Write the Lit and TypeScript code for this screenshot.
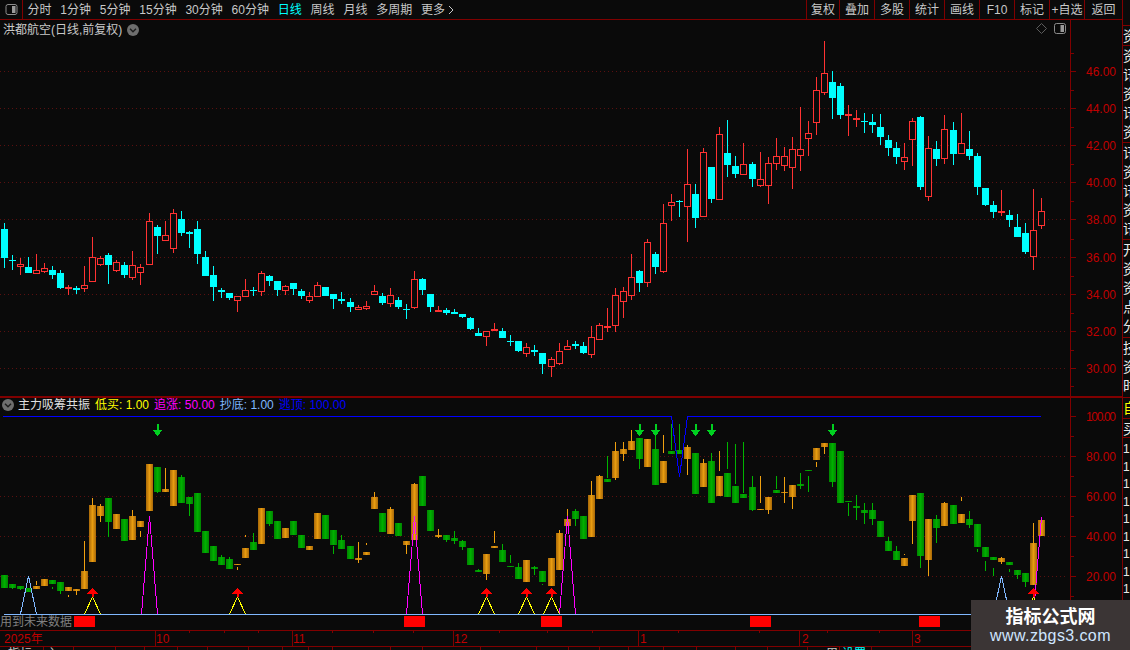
import { LitElement, html, css, svg } from "lit";
import { customElement } from "lit/decorators.js";

// [high, bodyTop, bodyBottom, low, rising]  all in page pixels
const PRICE: number[][] = [
	[223,229,258,268,0],[255,260,261,270,0],[258,264,267,275,1],[257,267,273,273,0],[254,270,274,274,1],
	[263,268,272,273,1],[266,270,275,279,0],[270,273,288,289,0],[285,287,289,295,1],[286,288,290,294,0],
	[266,285,289,292,1],[237,257,282,282,1],[256,258,265,266,1],[253,255,265,284,0],[260,262,271,272,1],
	[262,265,275,278,0],[251,265,278,280,1],[264,267,273,285,1],[213,221,265,265,1],[225,227,236,254,0],
	[221,235,241,241,1],[209,213,249,253,1],[211,219,233,236,0],[231,232,234,248,0],[221,229,254,264,0],
	[251,257,276,276,0],[266,275,287,301,0],[288,290,292,298,0],[293,293,298,300,0],[296,296,301,312,1],
	[279,290,297,297,1],[287,290,291,296,0],[271,273,292,296,1],[275,276,281,286,0],[281,281,290,296,0],
	[285,286,291,295,1],[283,283,289,295,0],[289,291,296,299,0],[292,296,301,303,1],[282,285,297,297,1],
	[287,287,296,296,0],[294,294,299,309,0],[292,299,301,304,0],[298,302,307,312,0],[305,307,310,310,1],
	[301,306,309,310,1],[285,291,295,295,1],[293,296,303,305,0],[288,295,304,307,1],[297,300,307,309,0],
	[304,309,310,319,0],[271,279,308,309,1],[278,279,290,295,0],[294,294,307,312,0],[306,310,312,312,1],
	[308,310,313,315,0],[309,312,314,314,0],[314,314,317,318,0],[317,318,329,330,0],[328,333,336,336,0],
	[331,331,337,346,1],[323,329,330,330,1],[328,331,338,338,0],[335,341,342,346,0],[341,341,351,352,0],
	[343,347,354,357,1],[345,350,352,356,0],[353,353,364,374,0],[357,359,367,377,1],[343,351,364,365,1],
	[340,346,350,350,1],[341,344,346,349,0],[342,346,353,354,0],[326,337,355,358,1],[323,325,340,340,1],
	[308,326,328,332,1],[288,295,326,332,1],[287,291,302,318,1],[254,277,296,300,1],[270,271,283,292,0],
	[239,242,283,287,1],[252,254,267,274,0],[204,223,272,273,1],[194,202,206,221,1],[200,201,202,217,0],
	[149,184,207,242,1],[184,194,218,228,0],[148,152,217,217,1],[167,167,199,203,0],[127,134,200,200,1],
	[120,153,165,177,0],[156,166,174,178,0],[143,164,175,175,1],[162,164,179,187,0],[152,179,186,187,1],
	[157,163,186,204,1],[138,156,164,170,1],[147,156,166,171,1],[137,149,168,189,1],[107,149,156,171,1],
	[121,133,139,156,1],[77,90,123,135,1],[41,73,93,95,1],[71,82,98,119,0],[83,86,115,119,0],
	[105,114,116,136,1],[110,118,120,127,1],[113,121,122,133,0],[114,122,125,133,0],[114,127,137,145,0],
	[135,140,148,156,0],[142,148,157,164,0],[143,157,162,170,1],[118,121,140,166,1],[116,117,187,190,0],
	[136,148,197,201,1],[141,149,159,166,0],[115,129,159,164,1],[122,130,154,165,0],[113,143,154,154,1],
	[131,149,156,160,0],[153,156,187,195,0],[188,188,205,206,0],[201,205,212,218,0],[190,211,213,216,1],
	[210,215,220,227,0],[214,227,237,237,0],[223,233,252,254,0],[189,230,257,270,1],[198,211,226,229,1],
];

// [bodyTop, bodyBottom, wickTop, wickBottom, orange]  wick may float off the body
const FLOW: number[][] = [
	[575,588,0,0,0],[584,588,588,589,0],[586,589,589,590,0],[588,592,0,0,0],[586,589,581,585,1],
	[579,586,0,0,1],[580,584,587,589,0],[582,591,591,594,0],[587,591,595,597,1],[589,591,591,595,1],
	[571,589,541,571,1],[505,562,498,505,1],[506,516,504,522,1],[498,522,522,537,0],[514,529,0,0,1],
	[519,541,0,0,0],[516,540,510,516,1],[521,527,531,537,1],[464,511,0,0,1],[467,492,492,493,0],
	[489,492,468,489,1],[470,506,0,0,1],[477,503,475,477,0],[497,504,504,516,0],[493,532,0,0,0],
	[531,553,0,0,0],[546,561,0,0,0],[557,565,555,557,0],[559,569,557,559,0],[564,565,567,570,1],
	[548,558,535,537,1],[542,550,533,542,0],[508,544,0,0,1],[511,524,524,526,0],[521,539,0,0,0],
	[528,538,0,0,1],[521,535,0,0,0],[535,548,0,0,0],[546,550,0,0,1],[513,539,0,0,1],
	[515,539,0,0,0],[530,545,546,554,0],[540,549,535,540,0],[546,559,0,0,0],[558,560,542,563,1],
	[552,555,543,545,1],[497,509,492,497,1],[513,532,0,0,0],[509,534,507,509,1],[523,536,0,0,0],
	[541,545,545,554,1],[484,540,483,484,1],[476,506,0,0,0],[510,531,0,0,0],[535,537,529,538,1],
	[535,540,540,542,0],[538,541,531,544,0],[541,547,540,550,0],[548,565,0,0,0],[570,572,569,570,0],
	[554,574,574,580,1],[546,548,531,543,1],[550,562,544,550,0],[566,567,555,563,0],[567,579,563,567,0],
	[560,582,0,0,1],[567,569,566,575,0],[571,582,584,585,0],[558,586,0,0,1],[533,570,530,533,1],
	[519,526,509,519,1],[511,519,509,526,0],[516,539,0,0,0],[495,537,481,495,1],[476,499,475,476,1],
	[479,482,456,478,0],[451,478,442,480,1],[449,454,442,461,1],[441,450,430,441,1],[438,459,459,469,0],
	[439,467,0,0,1],[449,485,436,449,0],[461,483,435,453,1],[451,454,424,450,0],[450,454,424,450,0],
	[447,459,445,475,1],[453,494,0,0,0],[463,487,459,463,1],[461,503,453,461,0],[476,496,451,471,1],
	[473,497,442,469,0],[486,503,444,484,0],[494,498,442,493,0],[487,510,476,511,0],[509,510,476,503,1],
	[497,510,510,514,1],[490,493,476,489,0],[492,493,477,503,1],[485,497,497,509,1],[484,486,473,489,0],
	[470,471,476,492,0],[448,460,462,467,1],[443,447,447,454,1],[443,482,482,487,0],[451,503,0,0,0],
	[501,502,503,516,0],[506,508,495,520,0],[510,513,503,524,0],[510,519,503,525,0],[521,537,0,0,0],
	[541,551,537,541,0],[551,560,546,551,0],[558,566,554,555,1],[495,521,521,544,1],[493,556,556,568,0],
	[519,560,560,576,1],[519,528,515,543,0],[503,526,502,503,1],[505,524,0,0,0],[514,523,497,501,1],
	[519,525,511,528,0],[524,547,549,552,0],[547,557,561,571,0],[557,560,568,576,0],[558,562,557,564,1],
	[562,565,569,572,0],[570,575,575,579,0],[573,582,582,587,0],[543,585,523,543,1],[520,536,0,0,1],
];

const PRICE_LABELS: [string, number][] = [["46.00",71.5],["44.00",108.5],["42.00",145.5],["40.00",182.5],["38.00",219.5],["36.00",257],["34.00",294],["32.00",331],["30.00",368]];
const FLOW_LABELS: [string, number][] = [["100.00",416.5],["80.00",456.5],["60.00",496.5],["40.00",536.5],["20.00",576.5]];
const MONTHS: [string, number][] = [["2025年",4],["10",156],["11",293],["12",454],["1",640],["2",802],["3",914]];
const MONTH_LINES = [155,292,453,638,799,912];
const AXIS_TICKS = [189,224,258,332,373,413,499,547,592,678,759,827,879];
const TAB_LINES = [43,73,115,144,177,207,248,282,308,332,390,422,480,536,568,599,628,663,696,735,767,807,839,871];
const RED_BLOCKS = [74,404,541,750,919];
const YELLOW_TRI = [11,29,60,65,68,128];
const DOWN_ARROWS = [19,79,81,86,88,103];

const cx = (i: number) => Math.floor(4.3 + 8.04 * i);

@customElement("chart-canvas")
class ChartCanvas extends LitElement {
	static styles = css`
		:host { display: block; width: 1122px; height: 630px; }
		svg { display: block; shape-rendering: crispEdges; }
		.rise { stroke: #ff3232; fill: #0a0a0a; }
		.rise-w { fill: #ff3232; }
		.fall { fill: #00ffff; }
		.grid { stroke: #5a1010; stroke-dasharray: 1 3; }
		.axis { stroke: #800000; }
		.orange-w { fill: #f0a010; }
		.green-w { fill: #00b400; }
		.lbl { font: 12px "Liberation Sans", sans-serif; fill: #c00000; }
		.mon { font: 12px "Liberation Sans", "Noto Sans CJK SC", sans-serif; fill: #c00000; }
		.tab { font: 12px "Noto Sans CJK SC", sans-serif; fill: #c8c8c8; }
		.tab-on { fill: #00ffff; }
		.spike-m { fill: none; stroke: #ff00ff; }
		.spike-b { fill: none; stroke: #80b8ff; }
		.spike-y { fill: none; stroke: #ffff00; }
		.blue { fill: none; stroke: #0000ff; }
		.base { stroke: #80b8ff; }
		.up { fill: #ff0000; }
		.dn { fill: #00d020; }
		.block { fill: #ff0000; }
	`;

	candle(c: number[], i: number) {
		const x = cx(i);
		const [hi, top, bot, lo, up] = c;
		if (up) {
			return svg`<rect class="rise-w" x=${x} y=${hi} width="1" height=${lo - hi}></rect>
				<rect class="rise" x=${x - 3 + 0.5} y=${top + 0.5} width="6" height=${Math.max(bot - top - 1, 1)}></rect>`;
		}
		return svg`<rect class="fall" x=${x} y=${hi} width="1" height=${lo - hi}></rect>
			<rect class="fall" x=${x - 3} y=${top} width="7" height=${Math.max(bot - top, 1)}></rect>`;
	}

	flowBar(c: number[], i: number) {
		const x = cx(i);
		const [top, bot, wt, wb, orange] = c;
		return svg`${wt ? svg`<rect class=${orange ? "orange-w" : "green-w"} x=${x} y=${wt} width="1" height=${wb - wt}></rect>` : ""}
			<rect fill=${orange ? "url(#bar-o)" : "url(#bar-g)"} x=${x - 3} y=${top} width="7" height=${Math.max(bot - top, 1)}></rect>`;
	}

	spike(i: number, apex: number, cls: string) {
		const x = cx(i) + 0.5;
		return svg`<polyline class=${cls} points="${x - 8},614 ${x},${apex} ${x + 8},614"></polyline>`;
	}

	render() {
		return html`<svg width="1122" height="630" viewBox="0 20 1122 630">
			<defs>
				<linearGradient id="bar-o">
					<stop offset="0" stop-color="#a86808"></stop>
					<stop offset="0.5" stop-color="#e89c10"></stop>
					<stop offset="1" stop-color="#a86808"></stop>
				</linearGradient>
				<linearGradient id="bar-g">
					<stop offset="0" stop-color="#008400"></stop>
					<stop offset="0.5" stop-color="#00b000"></stop>
					<stop offset="1" stop-color="#008400"></stop>
				</linearGradient>
			</defs>

			${PRICE_LABELS.map(([t, y]) => svg`
				<line class="grid" x1="0" x2="1068" y1=${y} y2=${y}></line>
				<line class="axis" x1="1071" x2="1076" y1=${y} y2=${y}></line>
				<line class="axis" x1="1071" x2="1074" y1=${y - 18} y2=${y - 18}></line>
				<text class="lbl" x="1086" y=${y + 4.5} textLength="30">${t}</text>`)}
			<line class="axis" x1="1071" x2="1074" y1="386" y2="386"></line>
			${FLOW_LABELS.map(([t, y]) => svg`
				${y > 420 ? svg`<line class="grid" x1="0" x2="1068" y1=${y} y2=${y}></line>` : ""}
				<line class="axis" x1="1071" x2="1076" y1=${y} y2=${y}></line>
				<line class="axis" x1="1071" x2="1074" y1=${y + 20} y2=${y + 20}></line>
				<text class="lbl" x="1086" y=${y + 4.5} textLength="30">${t}</text>`)}

			<line class="axis" x1="1070.5" x2="1070.5" y1="20" y2="630"></line>
			<rect x="0" y="396" width="1122" height="2" fill="#800000"></rect>

			${PRICE.map((c, i) => this.candle(c, i))}
			${FLOW.map((c, i) => this.flowBar(c, i))}

			<line class="spike-m" x1="20" x2="37" y1="614.5" y2="614.5"></line>
			<line class="base" x1="4" x2="1070" y1="614.5" y2="614.5"></line>
			${this.spike(3, 576, "spike-b")}
			${this.spike(124, 576, "spike-b")}
			${this.spike(18, 516, "spike-m")}
			${this.spike(51, 516, "spike-m")}
			${this.spike(70, 516, "spike-m")}
			<polyline class="spike-m" points="1033.5,614 1041.5,517"></polyline>
			<polyline class="blue" points="3,416.5 671.5,416.5 679.5,477 687.5,416.5 1041,416.5"></polyline>

			${YELLOW_TRI.map((i) => {
				const x = cx(i) + 0.5;
				return svg`<polyline class="spike-y" points="${x - 8},614 ${x},597 ${x + 8},614"></polyline>
					<rect class="up" x=${x - 1} y="592" width="2" height="5"></rect>
					<polygon class="up" points="${x},587.5 ${x + 5.5},593.5 ${x - 5.5},593.5"></polygon>`;
			})}
			${DOWN_ARROWS.map((i) => {
				const x = cx(i) + 0.5;
				return svg`<rect class="dn" x=${x - 1} y="424" width="2" height="6"></rect>
					<polygon class="dn" points="${x - 5.5},429.5 ${x + 5.5},429.5 ${x},436"></polygon>`;
			})}

			${RED_BLOCKS.map((x) => svg`<rect class="block" x=${x} y="616" width="21" height="11"></rect>`)}

			<line class="axis" x1="0" x2="1122" y1="630.5" y2="630.5"></line>
			<line class="axis" x1="0" x2="1122" y1="646.5" y2="646.5"></line>
			${MONTH_LINES.map((x) => svg`<line class="axis" x1=${x + 0.5} x2=${x + 0.5} y1="630" y2="646"></line>`)}
			${AXIS_TICKS.map((x) => svg`<line class="axis" x1=${x + 0.5} x2=${x + 0.5} y1="630" y2="633"></line>`)}
			${MONTHS.map(([t, x]) => svg`<text class="mon" x=${x} y="643">${t}</text>`)}
			${TAB_LINES.map((x) => svg`<line class="axis" x1=${x + 0.5} x2=${x + 0.5} y1="646" y2="650"></line>`)}
			<text class="tab" x="8" y="658">指标</text>
			<text class="tab" x="46" y="658">主</text>
			<text class="tab" x="826" y="658">周</text>
			<text class="tab tab-on" x="842" y="658">设置</text>
		</svg>`;
	}
}

@customElement("app-root")
export class AppRoot extends LitElement {
	static styles = css`
		:host {
			display: block;
			width: 1130px;
			height: 650px;
			background: #0a0a0a;
			overflow: hidden;
			color: #c8c8c8;
			font: 12px/16px "Liberation Sans", "Noto Sans CJK SC", sans-serif;
		}
		.app { display: flex; height: 650px; position: relative; }
		.main { width: 1122px; display: flex; flex-direction: column; flex: none; }

		.toolbar {
			height: 20px;
			box-sizing: border-box;
			display: flex;
			align-items: center;
			justify-content: space-between;
			border-bottom: 1px solid #800000;
			flex: none;
		}
		.periods { display: flex; align-items: center; height: 19px; gap: 8.8px; }
		.panel-btn {
			width: 23px;
			height: 19px;
			box-sizing: border-box;
			border-right: 1px solid #800000;
			display: flex;
			align-items: center;
			justify-content: center;
			margin-right: -4.3px;
		}
		.active { color: #00ffff; }
		.more { display: flex; align-items: center; gap: 3px; }
		.tools { display: grid; grid-template-columns: 33px repeat(7, 35px) 38px; height: 19px; }
		.tools span {
			border-left: 1px solid #800000;
			display: flex;
			align-items: center;
			justify-content: center;
		}

		.stage { position: relative; flex: 1; }
		.title {
			position: absolute;
			left: 3px;
			top: 2px;
			display: flex;
			align-items: center;
			gap: 5px;
		}
		.corner {
			position: absolute;
			left: 1036px;
			top: 3px;
			display: flex;
			align-items: center;
			gap: 7px;
		}
		.legend {
			position: absolute;
			left: 2px;
			top: 377px;
			display: flex;
			align-items: center;
			gap: 5px;
		}
		.legend .name { color: #e0e0e0; margin-left: -1px; }
		.yellow { color: #ffff00; }
		.magenta { color: #ff00ff; }
		.sky { color: #80b8ff; }
		.blue { color: #0000ff; }
		.future {
			position: absolute;
			left: 0;
			top: 594px;
			color: #808080;
			font-size: 12px;
			line-height: 16px;
		}

		.side {
			width: 8px;
			flex: none;
			box-sizing: border-box;
			border-left: 1px solid #800000;
			padding-top: 25px;
			overflow: hidden;
			display: flex;
			flex-direction: column;
			font-size: 14px;
			line-height: 19px;
			color: #e8e8e8;
			font-family: "Noto Sans CJK SC", sans-serif;
		}
		.cell {
			border-top: 1px solid #800000;
			box-sizing: border-box;
			width: 20px;
			flex: none;
			overflow: hidden;
		}
		.nums { font: 12px "Liberation Sans", sans-serif; padding-top: 3px; }
		.nums div { height: 17.5px; line-height: 17.5px; }

		.watermark {
			position: absolute;
			left: 971px;
			top: 600px;
			width: 159px;
			height: 50px;
			background: #3b3535;
			display: flex;
			flex-direction: column;
			align-items: center;
			justify-content: center;
		}
		.wm-cn { font: bold 18px/22px "Noto Sans CJK SC", sans-serif; color: #fff; }
		.wm-url { font: 16px/20px "Liberation Sans", sans-serif; color: #cfe6ff; letter-spacing: 0.4px; }
	`;

	chevron() {
		return html`<svg width="12" height="12" viewBox="0 0 12 12">
			<circle cx="6" cy="6" r="6" fill="#6e6e6e"></circle>
			<path d="M3 4.8 L6 7.8 L9 4.8" fill="none" stroke="#1c1c1c" stroke-width="1.4"></path>
		</svg>`;
	}

	panelIcon(w: number, h: number) {
		return html`<svg width=${w} height=${h} viewBox="0 0 12 11">
			<rect x="0.5" y="0.5" width="11" height="10" rx="2" fill="#0a0a0a" stroke="#8c8c8c"></rect>
			<rect x="6.5" y="2" width="3.5" height="7" fill="#9a9a9a"></rect>
		</svg>`;
	}

	render() {
		const periods = ["分时", "1分钟", "5分钟", "15分钟", "30分钟", "60分钟"];
		const after = ["周线", "月线", "多周期"];
		const tools = ["复权", "叠加", "多股", "统计", "画线", "F10", "标记", "+自选", "返回"];
		const sideTop: [string, number][] = [["资", 20], ["资讯资讯资", 97], ["讯资讯资讯", 97], ["开资资点分", 98], ["技资时", 60]];
		const nums = Array.from({ length: 10 }, () => "1");
		return html`<div class="app">
			<div class="main">
				<div class="toolbar">
					<div class="periods">
						<div class="panel-btn">${this.panelIcon(13, 11)}</div>
						${periods.map((p) => html`<span>${p}</span>`)}
						<span class="active">日线</span>
						${after.map((p) => html`<span>${p}</span>`)}
						<span class="more">更多
							<svg width="6" height="10" viewBox="0 0 6 10"><path d="M1 1 L5 5 L1 9" fill="none" stroke="#c8c8c8"></path></svg>
						</span>
					</div>
					<div class="tools">${tools.map((t) => html`<span>${t}</span>`)}</div>
				</div>
				<div class="stage">
					<chart-canvas></chart-canvas>
					<div class="title"><span>洪都航空(日线,前复权)</span>${this.chevron()}</div>
					<div class="corner">
						<svg width="11" height="11" viewBox="0 0 11 11"><path d="M5.5 0.5 L10.5 5.5 L5.5 10.5 L0.5 5.5 Z" fill="none" stroke="#5c5c5c"></path></svg>
						${this.panelIcon(12, 11)}
					</div>
					<div class="legend">
						${this.chevron()}
						<span class="name">主力吸筹共振</span>
						<span class="yellow">低买: 1.00</span>
						<span class="magenta">追涨: 50.00</span>
						<span class="sky">抄底: 1.00</span>
						<span class="blue">逃顶: 100.00</span>
					</div>
					<div class="future">用到未来数据</div>
				</div>
			</div>
			<div class="side">
				${sideTop.map(([t, h]) => html`<div class="cell" style="height:${h}px">${[...t].map((c) => html`<div>${c}</div>`)}</div>`)}
				<div class="cell yellow" style="height:21px">自</div>
				<div class="cell" style="height:19px">买</div>
				<div class="cell nums" style="height:193px">${nums.map((n) => html`<div>${n}</div>`)}</div>
			</div>
			<div class="watermark">
				<div class="wm-cn">指标公式网</div>
				<div class="wm-url">www.zbgs3.com</div>
			</div>
		</div>`;
	}
}
